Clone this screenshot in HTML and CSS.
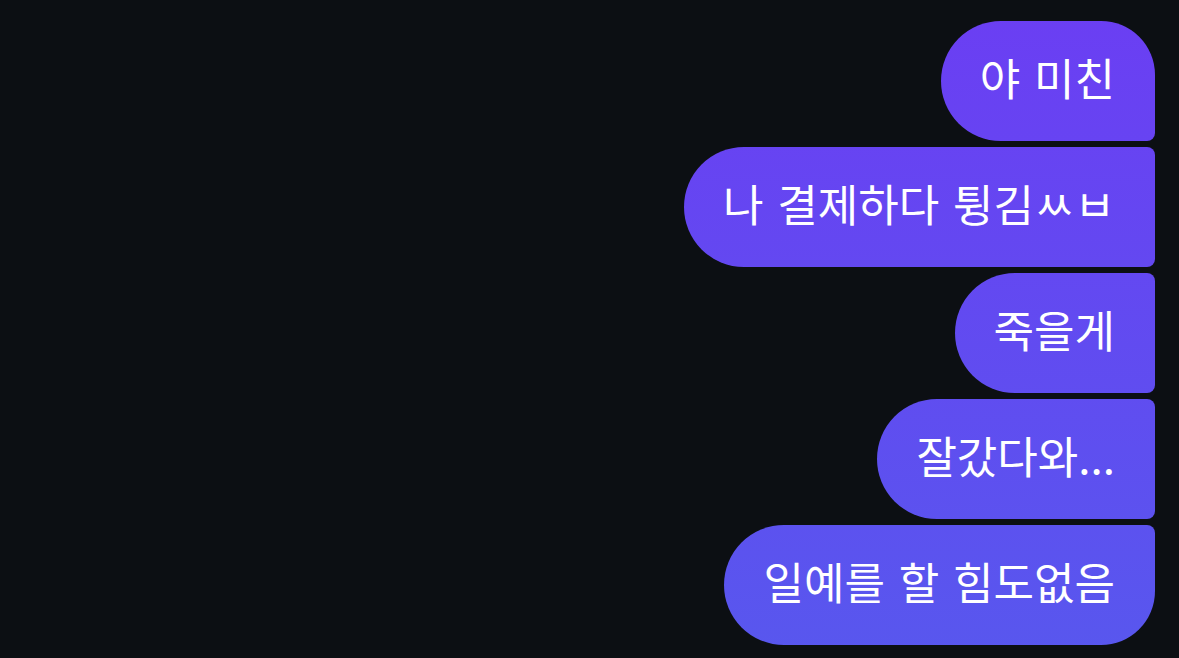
FILE: index.html
```html
<!DOCTYPE html>
<html>
<head>
	<meta charset='utf-8'>
	<title>chat</title>
	<link rel="stylesheet" href="styles.css">
</head>
<body>
	<ul class="messages">
		<li class="bubble first">야 미친</li>
		<li class="bubble">나 결제하다 튕김ㅆㅂ</li>
		<li class="bubble">죽을게</li>
		<li class="bubble">잘갔다와...</li>
		<li class="bubble last">일예를 할 힘도없음</li>
	</ul>
</body>
</html>
```

FILE: styles.css
```css
* {
	padding: 0;
	margin: 0;
}
li {
	list-style: none;
}
html, body {
	height: 100%;
}
body {
	background: #0c0f13;
	font-family: "Noto Sans CJK KR", "Noto Sans", sans-serif;
}
.messages {
	display: flex;
	flex-direction: column;
	align-items: flex-end;
	gap: 6px;
	padding: 21px 24px 0 0;
}
.bubble {
	display: flex;
	align-items: center;
	height: 120px;
	padding: 0 40px 8px 39px;
	box-sizing: border-box;
	border-radius: 60px 8px 8px 60px;
	background: linear-gradient(180deg, #6b3ef3 0%, #5857ee 100%) fixed;
	color: #fff;
	font-size: 44px;
	word-spacing: 4px;
	line-height: 1;
	white-space: nowrap;
}
.first {
	border-top-right-radius: 54px;
}
.last {
	border-bottom-right-radius: 54px;
}
```
